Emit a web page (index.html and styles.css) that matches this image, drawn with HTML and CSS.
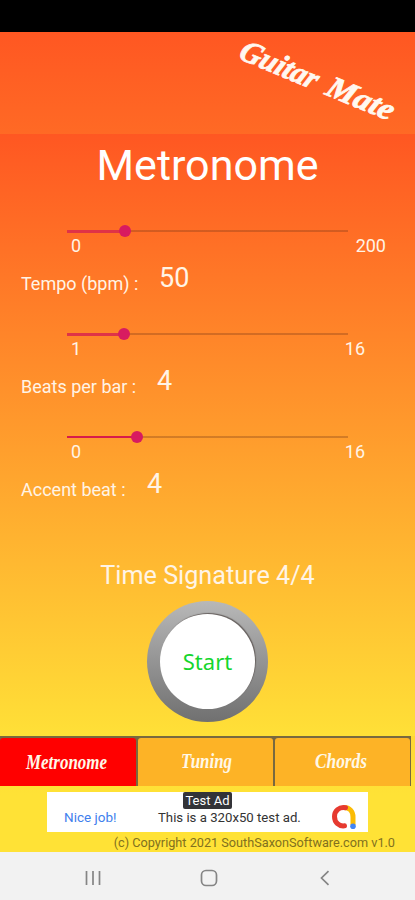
FILE: index.html
```html
<!DOCTYPE html>
<html lang="en">
<head>
    <meta charset="utf-8">
    <title>Guitar Mate</title>

    <meta name="viewport" content="width=device-width, initial-scale=1"/>
    <link rel="stylesheet" href="styles.css">
</head>
<body>
<div class="statusbar"></div>
<div class="app">
    <header class="header">
        <svg class="logo" width="195" height="102" viewBox="0 0 195 102">
            <g transform="translate(17 26) rotate(22.5) skewX(-6)">
                <text x="0" y="0" textLength="82" lengthAdjust="spacingAndGlyphs">Guitar</text>
                <text x="94" y="0" textLength="70" lengthAdjust="spacingAndGlyphs">Mate</text>
            </g>
        </svg>
    </header>

    <main class="content">
        <h1>Metronome</h1>

        <section class="control">
            <div class="slider">
                <div class="fill" style="width: 58px"></div>
                <div class="thumb"></div>
            </div>
            <div class="range"><span>0</span><span class="max wide">200</span></div>
            <div class="reading"><span class="label tempo">Tempo (bpm) :</span><span class="value">50</span></div>
        </section>

        <section class="control">
            <div class="slider">
                <div class="fill" style="width: 57px"></div>
                <div class="thumb"></div>
            </div>
            <div class="range"><span>1</span><span class="max">16</span></div>
            <div class="reading"><span class="label beats">Beats per bar :</span><span class="value">4</span></div>
        </section>

        <section class="control">
            <div class="slider strong">
                <div class="fill" style="width: 70px"></div>
                <div class="thumb"></div>
            </div>
            <div class="range"><span>0</span><span class="max">16</span></div>
            <div class="reading"><span class="label accent">Accent beat :</span><span class="value">4</span></div>
        </section>

        <p class="signature">Time Signature 4/4</p>
        <button class="start" type="button"><span>Start</span></button>
    </main>

    <nav class="tabs">
        <a class="tab active">
            <svg width="136" height="47"><text x="26" y="31" textLength="81" lengthAdjust="spacingAndGlyphs">Metronome</text></svg>
        </a>
        <a class="tab">
            <svg width="135" height="47"><text x="43" y="30" textLength="51" lengthAdjust="spacingAndGlyphs">Tuning</text></svg>
        </a>
        <a class="tab">
            <svg width="135" height="47"><text x="40" y="30" textLength="52" lengthAdjust="spacingAndGlyphs">Chords</text></svg>
        </a>
    </nav>

    <div class="ad">
        <span class="nice">Nice job!</span>
        <span class="adtext">This is a 320x50 test ad.</span>
        <span class="badge">Test Ad</span>
        <svg class="admob" width="26" height="26" viewBox="0 0 26 26" fill="none" stroke-width="5">
            <path d="M13 3.5 C18.5 3.5 22 7.5 22 13 V21" stroke="#fbbc04"/>
            <path d="M14.5 3.7 C8 2.5 3.5 7 3.5 12.5 C3.5 18.5 8 22.5 13.5 21.8" stroke="#e63a30" stroke-linecap="round"/>
            <circle cx="22" cy="22.2" r="2.8" fill="#4285f4"/>
        </svg>
    </div>
    <p class="copyright">(c) Copyright 2021 SouthSaxonSoftware.com v1.0</p>
</div>

<div class="navbar">
    <svg width="16" height="16" viewBox="0 0 16 16"><path d="M1.5 1v14M8 1v14M14.5 1v14"/></svg>
    <svg class="home" width="18" height="18" viewBox="0 0 18 18"><rect x="1.5" y="1.5" width="15" height="15" rx="4.5"/></svg>
    <svg width="10" height="16" viewBox="0 0 10 16"><path d="M8.5 1.2L1.5 8l7 6.8"/></svg>
</div>
</body>
</html>
```

FILE: styles.css
```css
* {
    box-sizing: border-box;
}

body {
    margin: 0;
    width: 415px;
    height: 900px;
    overflow: hidden;
    font-family: Roboto, Arial, sans-serif;
    color: #fff4e6;
}

.statusbar {
    height: 32px;
    background: #000000;
}

.app {
    height: 820px;
    background: linear-gradient(to bottom, #ff5722 0%, #ffe236 93%);
}

.header {
    display: flex;
    justify-content: flex-end;
    height: 102px;
}

.logo {
    overflow: visible;
}

.logo text {
    font: italic bold 31px "Brush Script MT", "Liberation Serif", serif;
    fill: #fff8f0;
    stroke: #fff8f0;
    stroke-width: 0.8;
}

.content {
    height: 602px;
    background: linear-gradient(to bottom, #ff5722 0%, #ffe037 100%);
}

h1 {
    margin: 0;
    padding-top: 4px;
    height: 89px;
    font-size: 43px;
    font-weight: normal;
    line-height: 54px;
    text-align: center;
    color: #ffffff;
}

.control {
    height: 103px;
}

.slider {
    display: flex;
    align-items: center;
    width: 281px;
    height: 16px;
    margin-left: 67px;
    background: linear-gradient(rgba(110, 50, 20, 0.3), rgba(110, 50, 20, 0.3)) center / 100% 2px no-repeat;
}

.fill {
    height: 3px;
    background: #df3347;
}

.strong .fill {
    height: 2px;
    background: #d81b4b;
}

.thumb {
    width: 12px;
    height: 12px;
    margin-left: -6px;
    border-radius: 50%;
    background: #d81b60;
}

.range {
    display: flex;
    justify-content: space-between;
    height: 25px;
    padding: 0 50px 0 71px;
    font-size: 18px;
    line-height: 13px;
}

.range .wide {
    margin-right: -21px;
}

.reading {
    display: flex;
    padding-left: 21px;
}

.label {
    padding-top: 9px;
    font-size: 18px;
    line-height: 22px;
    white-space: nowrap;
}

.tempo {
    width: 138px;
}

.beats {
    width: 136px;
}

.accent {
    width: 126px;
}

.value {
    font-size: 27px;
    line-height: 28px;
}

.signature {
    margin: 29px 0 0;
    font-size: 25.2px;
    line-height: 30px;
    text-align: center;
}

.start {
    display: block;
    width: 121px;
    height: 121px;
    margin: 10px auto 0;
    padding: 13px;
    border: none;
    border-radius: 50%;
    background: linear-gradient(to bottom, #b8b8b8, #707070);
}

.start span {
    display: block;
    height: 95px;
    border-radius: 50%;
    box-shadow: 1px -1px 1px #66605e;
    background: #ffffff;
    color: #14d62d;
    font-family: "Noto Sans", sans-serif;
    font-size: 22px;
    line-height: 94px;
}

.tabs {
    display: flex;
    gap: 2px;
    width: 411px;
    height: 50px;
    padding: 2px 2px 0 0;
    background: #78693f;
}

.tab {
    flex: 1;
    height: 48px;
    border-radius: 3px 3px 0 0;
    background: #fdb326;
}

.tab.active {
    background: #ff0000;
}

.tab text {
    font: italic bold 20px "Brush Script MT", "Liberation Serif", serif;
    fill: #fff8e8;
}

.ad {
    position: relative;
    display: flex;
    align-items: center;
    width: 321px;
    height: 40px;
    margin: 6px 0 0 47px;
    padding: 10px 11px 0 17px;
    background: #ffffff;
    font-size: 13px;
}

.nice {
    width: 94px;
    color: #3f80ed;
    font-size: 13.5px;
}

.adtext {
    flex: 1;
    color: #333333;
    font-size: 13.2px;
    white-space: nowrap;
}

.badge {
    position: absolute;
    top: 0;
    left: 136px;
    width: 49px;
    height: 17px;
    border-radius: 2px;
    background: #333338;
    color: #ffffff;
    font-size: 13px;
    line-height: 18px;
    text-align: center;
}

.admob {
    margin-top: -1px;
}

.copyright {
    margin: 2px 20px 0 0;
    color: #81701f;
    font-size: 12.7px;
    line-height: 18px;
    text-align: right;
}

.navbar {
    display: flex;
    justify-content: space-between;
    align-items: center;
    height: 48px;
    padding: 3px 85px 0;
    background: #f2f2f2;
}

.navbar svg {
    fill: none;
    stroke: #858585;
    stroke-width: 1.7;
}

.navbar .home {
    margin-right: 4px;
}
```
